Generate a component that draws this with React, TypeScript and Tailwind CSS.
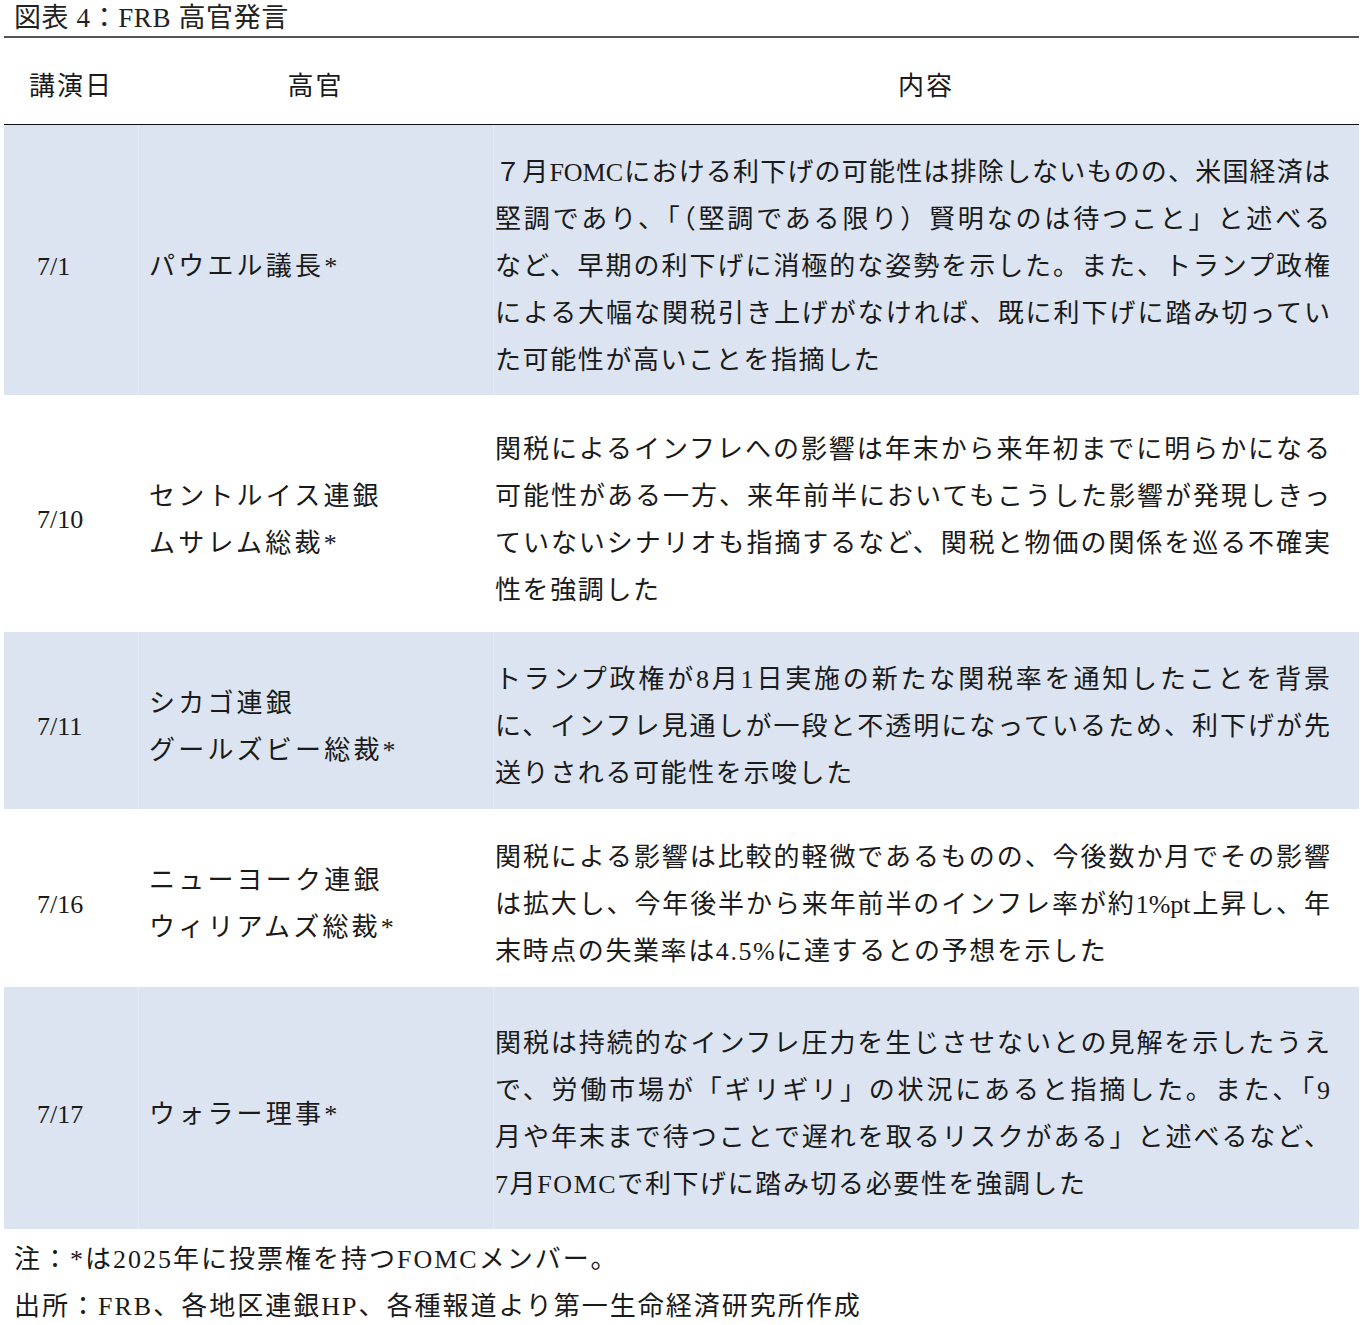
const rows = [
  {
    date: "7/1",
    name: ["パウエル議長*"],
    lines: [
      "７月FOMCにおける利下げの可能性は排除しないものの、米国経済は",
      "堅調であり、「（堅調である限り）賢明なのは待つこと」と述べる",
      "など、早期の利下げに消極的な姿勢を示した。また、トランプ政権",
      "による大幅な関税引き上げがなければ、既に利下げに踏み切ってい",
      "た可能性が高いことを指摘した",
    ],
    shaded: true,
    height: "h-[270px]",
  },
  {
    date: "7/10",
    name: ["セントルイス連銀", "ムサレム総裁*"],
    lines: [
      "関税によるインフレへの影響は年末から来年初までに明らかになる",
      "可能性がある一方、来年前半においてもこうした影響が発現しきっ",
      "ていないシナリオも指摘するなど、関税と物価の関係を巡る不確実",
      "性を強調した",
    ],
    shaded: false,
    height: "h-[237px]",
  },
  {
    date: "7/11",
    name: ["シカゴ連銀", "グールズビー総裁*"],
    lines: [
      "トランプ政権が8月1日実施の新たな関税率を通知したことを背景",
      "に、インフレ見通しが一段と不透明になっているため、利下げが先",
      "送りされる可能性を示唆した",
    ],
    shaded: true,
    height: "h-[177px]",
  },
  {
    date: "7/16",
    name: ["ニューヨーク連銀", "ウィリアムズ総裁*"],
    lines: [
      "関税による影響は比較的軽微であるものの、今後数か月でその影響",
      "は拡大し、今年後半から来年前半のインフレ率が約1%pt上昇し、年",
      "末時点の失業率は4.5%に達するとの予想を示した",
    ],
    shaded: false,
    height: "h-[178px]",
  },
  {
    date: "7/17",
    name: ["ウォラー理事*"],
    lines: [
      "関税は持続的なインフレ圧力を生じさせないとの見解を示したうえ",
      "で、労働市場が「ギリギリ」の状況にあると指摘した。また、「9",
      "月や年末まで待つことで遅れを取るリスクがある」と述べるなど、",
      "7月FOMCで利下げに踏み切る必要性を強調した",
    ],
    shaded: true,
    height: "h-[242px]",
  },
];

export default function App() {
  return (
    <div className="min-h-screen w-[1364px] bg-white pl-[4px] pr-[5px] text-[#1a1a1a] [font-family:'Liberation_Serif','Noto_Sans_CJK_JP',serif]">
      <h1 className="h-[36px] pl-[10px] text-[27px] leading-[36px] font-normal tracking-[0.6px] text-[#222]">
        図表 4：FRB 高官発言
      </h1>
      <div className="h-[2px] bg-[#555]" />

      <div className="grid h-[87px] grid-cols-[134px_355px_1fr] items-center border-b-[1.5px] border-[#111] pt-[10px] text-[26px] tracking-[2px]">
        <div className="text-center">講演日</div>
        <div className="text-center">高官</div>
        <div className="text-center">内容</div>
      </div>

      {rows.map((r) => (
        <div
          key={r.date}
          className={`grid grid-cols-[134px_355px_1fr] ${r.height} ${r.shaded ? "bg-[#dbe4f0]" : "bg-white"}`}
        >
          <div className="flex items-center pt-[12px] pl-[33px] text-[26px] leading-[47px]">
            {r.date}
          </div>
          <div
            className={`flex flex-col justify-center border-l pt-[12px] pl-[10px] text-[26px] leading-[47px] tracking-[3.2px] ${r.shaded ? "border-[#e6ecf5]" : "border-transparent"}`}
          >
            {r.name.map((n) => (
              <div key={n}>{n}</div>
            ))}
          </div>
          <div
            className={`flex flex-col justify-center border-l pt-[12px] pl-[1px] pr-[29px] text-[26px] leading-[47px] ${r.shaded ? "border-[#e6ecf5]" : "border-transparent"}`}
          >
            {r.lines.map((l, i) => (
              <div
                key={i}
                className={
                  i < r.lines.length - 1
                    ? "text-justify [text-align-last:justify] whitespace-nowrap tracking-[0px]"
                    : "whitespace-nowrap tracking-[1.6px]"
                }
              >
                {l}
              </div>
            ))}
          </div>
        </div>
      ))}

      <div className="pl-[10px] pt-[7px] text-[26px] leading-[47px] tracking-[2px]">
        <p>注：*は2025年に投票権を持つFOMCメンバー。</p>
        <p>出所：FRB、各地区連銀HP、各種報道より第一生命経済研究所作成</p>
      </div>
    </div>
  );
}
